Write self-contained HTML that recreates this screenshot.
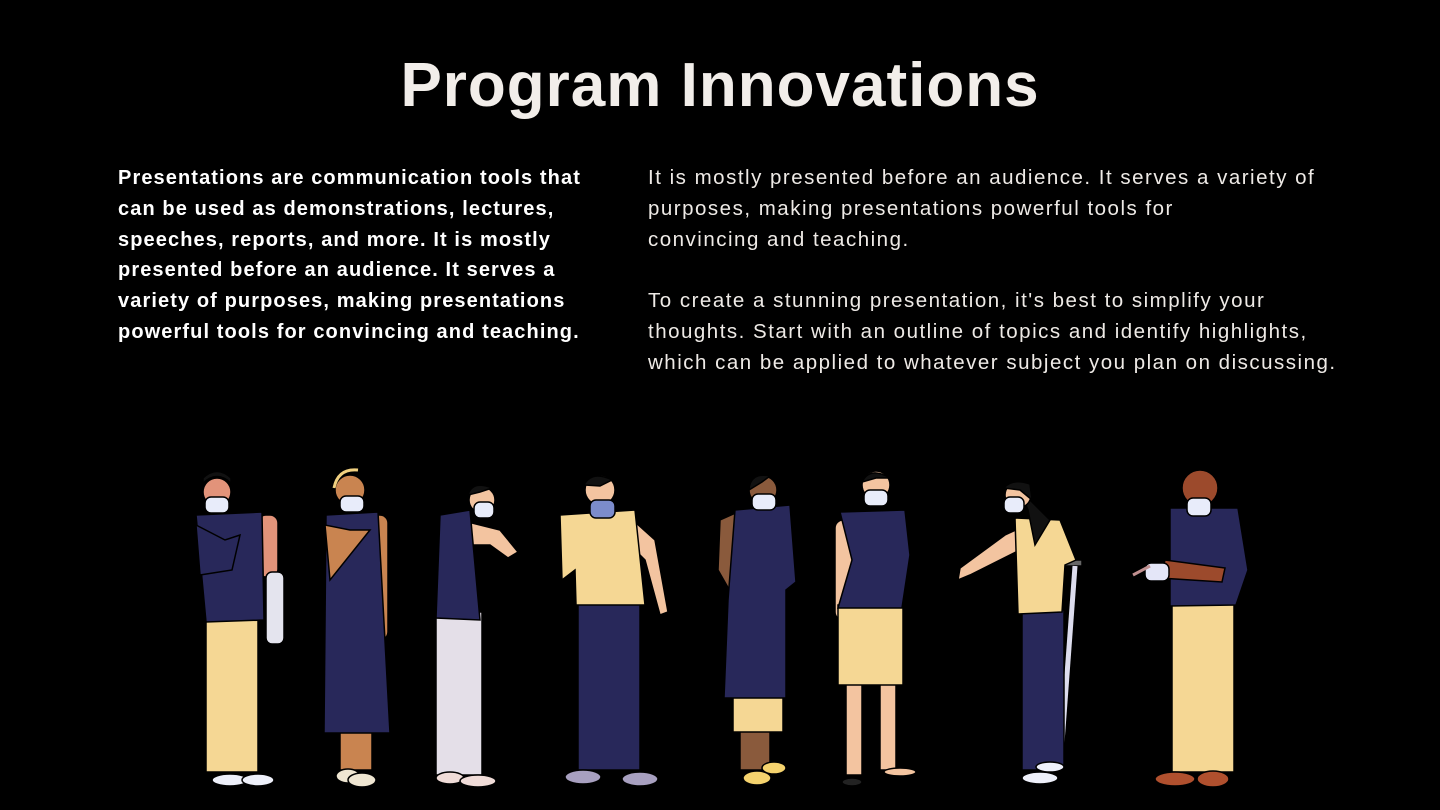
<!DOCTYPE html>
<html><head><meta charset="utf-8"><style>
html,body{margin:0;padding:0;background:#000;}
body{width:1440px;height:810px;position:relative;overflow:hidden;font-family:"Liberation Sans",sans-serif;color:#f2eeea;}
h1{position:absolute;left:0;width:1440px;top:46px;margin:0;text-align:center;font-size:62px;font-weight:bold;letter-spacing:1px;line-height:80px;}
.l{position:absolute;left:118px;top:163px;width:560px;font-size:20px;font-weight:bold;line-height:30.8px;color:#fff;letter-spacing:1.1px;white-space:nowrap;}
.r{position:absolute;left:648px;top:163px;width:780px;font-size:20.5px;line-height:30.8px;color:#eeeae6;letter-spacing:1.5px;white-space:nowrap;}
svg{position:absolute;left:0;top:0;}
</style></head><body>
<h1>Program Innovations</h1>
<div class="l">Presentations are communication tools that<br>can be used as demonstrations, lectures,<br>speeches, reports, and more. It is mostly<br>presented before an audience. It serves a<br>variety of purposes, making presentations<br>powerful tools for convincing and teaching.</div>
<div class="r">It is mostly presented before an audience. It serves a variety of<br>purposes, making presentations powerful tools for<br>convincing and teaching.<br><br>To create a stunning presentation, it's best to simplify your<br>thoughts. Start with an outline of topics and identify highlights,<br>which can be applied to whatever subject you plan on discussing.</div>
<svg width="1440" height="810" stroke="#000" stroke-width="1.5">
<g>
<rect x="258" y="515" width="20" height="62" rx="8" fill="#e2937a"/>
<rect x="266" y="572" width="18" height="72" rx="6" fill="#e4e4ee"/>
<rect x="206" y="615" width="52" height="157" fill="#f5d794"/>
<path d="M196 515 L262 512 L264 620 L206 622 Z" fill="#28285a"/>
<path d="M196 525 L200 575 L232 570 L240 535 L225 540 Z" fill="#28285a"/>
<circle cx="217" cy="492" r="14" fill="#e2937a"/>
<path d="M203 483 Q217 470 231 483 L231 478 Q217 465 203 478Z" fill="#111"/>
<rect x="205" y="497" width="24" height="16" rx="6" fill="#e8ecfa"/>
<ellipse cx="230" cy="780" rx="18" ry="6" fill="#eef0fa"/>
<ellipse cx="258" cy="780" rx="16" ry="6" fill="#eef0fa"/>
</g>
<g>
<rect x="370" y="515" width="18" height="125" rx="8" fill="#c98450"/>
<rect x="340" y="725" width="32" height="45" fill="#c98450"/>
<path d="M326 515 L378 512 L390 733 L324 733 Z" fill="#28285a"/>
<path d="M325 525 L330 580 L370 530 L350 530Z" fill="#c98450"/>
<circle cx="350" cy="490" r="15" fill="#c98450"/>
<path d="M334 488 Q338 468 358 470" fill="none" stroke="#f0d080" stroke-width="3"/>
<rect x="340" y="496" width="24" height="16" rx="6" fill="#e8ecfa"/>
<ellipse cx="348" cy="776" rx="12" ry="7" fill="#efe6d2"/>
<ellipse cx="362" cy="780" rx="14" ry="7" fill="#efe6d2"/>
</g>
<g>
<path d="M460 520 L500 530 L518 552 L508 558 L490 545 L460 545Z" fill="#f3c4a0"/>
<rect x="436" y="612" width="46" height="163" fill="#e4dfe8"/>
<path d="M440 515 L470 510 L480 620 L436 618 Z" fill="#28285a"/>
<circle cx="482" cy="500" r="13" fill="#f3c4a0"/>
<path d="M468 495 Q472 480 492 488 L480 492Z" fill="#111"/>
<rect x="474" y="502" width="20" height="16" rx="6" fill="#e8ecfa"/>
<ellipse cx="450" cy="778" rx="14" ry="6" fill="#f0dcd8"/>
<ellipse cx="478" cy="781" rx="18" ry="6" fill="#f0dcd8"/>
</g>
<g>
<path d="M635 522 L655 540 L668 612 L660 615 L645 560 L630 545Z" fill="#f3c4a0"/>
<rect x="578" y="600" width="62" height="170" fill="#28285a"/>
<path d="M560 515 L635 510 L645 605 L576 605 L575 570 L562 580Z" fill="#f5d794"/>
<circle cx="600" cy="490" r="15" fill="#f3c4a0"/>
<path d="M584 485 Q592 470 612 480 L600 486Z" fill="#111"/>
<rect x="590" y="500" width="25" height="18" rx="6" fill="#7c8ccc"/>
<ellipse cx="583" cy="777" rx="18" ry="7" fill="#a8a0c0"/>
<ellipse cx="640" cy="779" rx="18" ry="7" fill="#a8a0c0"/>
</g>
<g>
<path d="M720 520 L738 512 L735 570 L752 608 L742 612 L718 570Z" fill="#8a5a3c"/>
<rect x="740" y="730" width="30" height="40" fill="#8a5a3c"/>
<rect x="733" y="690" width="50" height="42" fill="#f5d794"/>
<path d="M735 510 L790 505 L796 582 L786 590 L786 698 L724 698 L728 600Z" fill="#28285a"/>
<circle cx="763" cy="490" r="14" fill="#8a5a3c"/>
<path d="M749 490 Q750 472 770 476 L762 482Z" fill="#111"/>
<rect x="752" y="494" width="24" height="16" rx="6" fill="#e8ecfa"/>
<ellipse cx="757" cy="778" rx="14" ry="7" fill="#f5d36e"/>
<ellipse cx="774" cy="768" rx="12" ry="6" fill="#f5d36e"/>
</g>
<g>
<rect x="835" y="520" width="18" height="100" rx="8" fill="#f3c4a0"/>
<rect x="846" y="680" width="16" height="95" fill="#f3c4a0"/>
<rect x="880" y="680" width="16" height="90" fill="#f3c4a0"/>
<rect x="838" y="605" width="65" height="80" fill="#f5d794"/>
<path d="M840 512 L905 510 L910 555 L902 608 L838 608 L852 560Z" fill="#28285a"/>
<circle cx="876" cy="485" r="14" fill="#f3c4a0"/>
<path d="M862 482 Q870 466 890 478 L876 478Z" fill="#111"/>
<rect x="864" y="490" width="24" height="16" rx="6" fill="#e8ecfa"/>
<ellipse cx="852" cy="782" rx="10" ry="4" fill="#222"/>
<ellipse cx="900" cy="772" rx="16" ry="4" fill="#f3c4a0"/>
</g>
<g>
<path d="M1020 528 L1030 545 L970 575 L958 580 L960 568 L1005 535Z" fill="#f3c4a0"/>
<rect x="1060" y="560" width="22" height="6" fill="#666"/>
<line x1="1075" y1="566" x2="1060" y2="770" stroke="#dde" stroke-width="5"/>
<rect x="1022" y="610" width="42" height="160" fill="#28285a"/>
<path d="M1015 518 L1060 520 L1076 560 L1065 565 L1062 612 L1018 614Z" fill="#f5d794"/>
<path d="M1020 490 L1050 520 L1035 545 L1028 510Z" fill="#111"/>
<circle cx="1018" cy="495" r="13" fill="#f3c4a0"/>
<path d="M1004 488 Q1012 478 1030 484 L1032 500 L1020 490Z" fill="#111"/>
<rect x="1004" y="497" width="20" height="16" rx="6" fill="#e8ecfa"/>
<ellipse cx="1040" cy="778" rx="18" ry="6" fill="#eef0fa"/>
<ellipse cx="1050" cy="767" rx="14" ry="5" fill="#eef0fa"/>
</g>
<g>
<rect x="1172" y="600" width="62" height="172" fill="#f5d794"/>
<path d="M1170 508 L1238 508 L1248 570 L1236 605 L1170 606 Z" fill="#28285a"/>
<path d="M1165 560 L1225 568 L1222 582 L1160 578Z" fill="#9c4a2c"/>
<rect x="1145" y="563" width="24" height="18" rx="6" fill="#e4e6f8"/>
<line x1="1133" y1="575" x2="1150" y2="566" stroke="#c09090" stroke-width="3"/>
<circle cx="1200" cy="488" r="18" fill="#9c4a2c"/>
<rect x="1187" y="498" width="24" height="18" rx="6" fill="#e8ecfa"/>
<ellipse cx="1175" cy="779" rx="20" ry="7" fill="#b0502e"/>
<ellipse cx="1213" cy="779" rx="16" ry="8" fill="#b0502e"/>
</g>
</svg>
</body></html>
